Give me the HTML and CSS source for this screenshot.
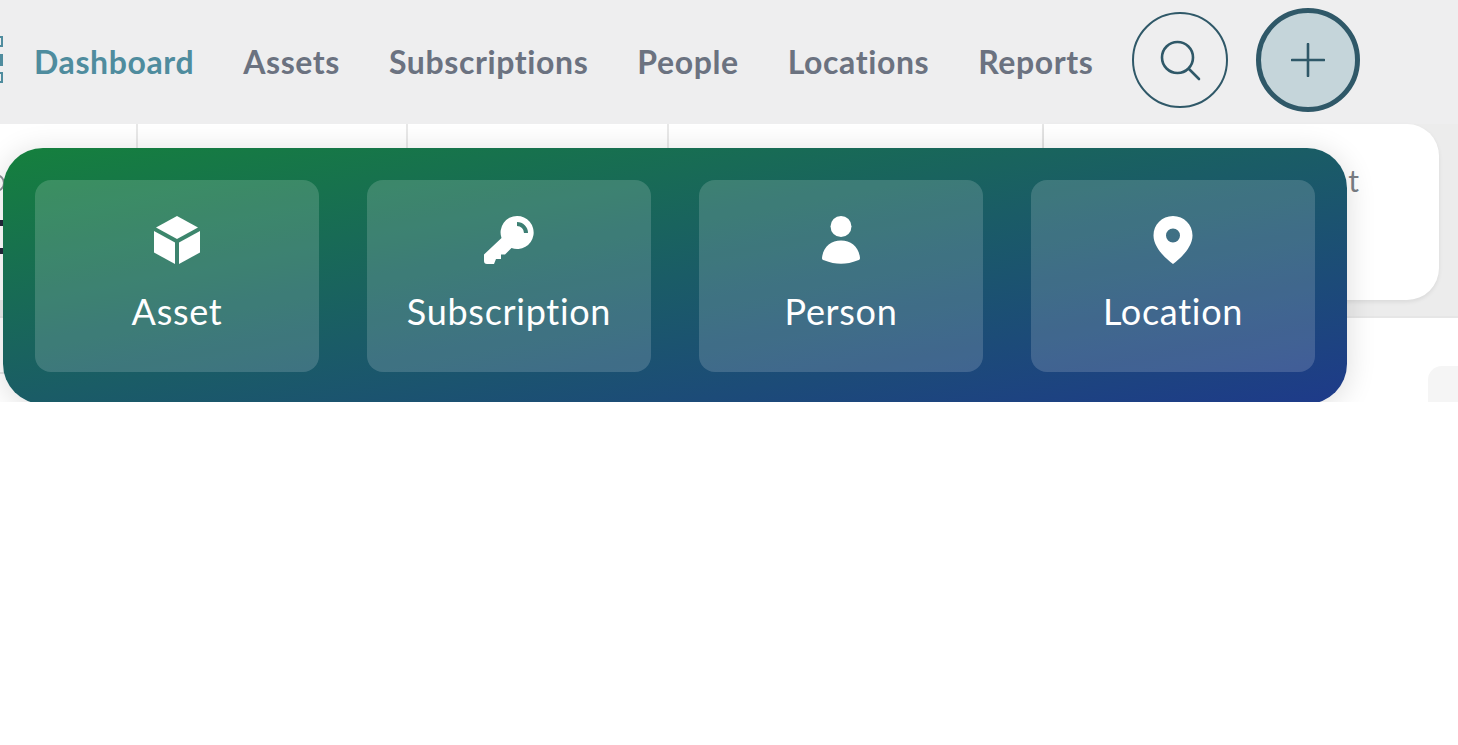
FILE: index.html
```html
<!DOCTYPE html>
<html lang="en">
<head>
  <meta charset="UTF-8" />
  <title>Dashboard</title>
  <link rel="stylesheet" href="styles.css">
</head>
<body>
  <div class="stage">
    <header class="topbar">
      <svg class="logo" width="3" height="48" viewBox="0 0 3 48">
        <rect x="-6" y="1" width="8" height="9" fill="none" stroke="#4f8c9e" stroke-width="2"/>
        <rect x="-6" y="18" width="9" height="12" fill="#4f8c9e"/>
        <rect x="-6" y="37" width="8" height="9" fill="none" stroke="#4f8c9e" stroke-width="2"/>
      </svg>
      <nav class="nav">
        <a class="nav-link active">Dashboard</a>
        <a class="nav-link">Assets</a>
        <a class="nav-link">Subscriptions</a>
        <a class="nav-link">People</a>
        <a class="nav-link">Locations</a>
        <a class="nav-link">Reports</a>
      </nav>
      <button class="round-btn search">
        <svg width="48" height="48" viewBox="0 0 48 48" fill="none" stroke="#2f5868" stroke-width="2.6" stroke-linecap="round">
          <circle cx="21.5" cy="21.500" r="15.5"/>
          <path d="M33 33l10 10"/>
        </svg>
      </button>
      <button class="round-btn add">
        <svg width="34" height="34" viewBox="0 0 34 34" fill="none" stroke="#2f5868" stroke-width="2.6" stroke-linecap="round">
          <path d="M17 1v32M1 17h32"/>
        </svg>
      </button>
    </header>

    <section class="stats">
      <div class="stat s1">
        <span class="stat-ring"></span>
        <span class="stat-bar"></span>
        <span class="stat-bar"></span>
      </div>
      <div class="stat s2"></div>
      <div class="stat s3"></div>
      <div class="stat s4"></div>
      <div class="stat s5"><span class="stat-tail">t</span></div>
    </section>
    <div class="table-row"></div>
    <div class="corner-block"></div>

    <div class="quick-add">
      <a class="quick-item">
        <svg width="48" height="50" viewBox="0 0 48 50" fill="#fff">
          <path d="M24 1L45 12.5 24 24 3 12.5z"/>
          <path d="M1 16l21 11.5V49L1 37.5z"/>
          <path d="M47 16L26 27.5V49l21-11.5z"/>
        </svg>
        <span>Asset</span>
      </a>
      <a class="quick-item">
        <svg width="50" height="50" viewBox="0 0 50 50" fill="#fff">
          <path fill-rule="evenodd" d="M33 1a16.500 16.500 0 1 1-5.500 32L21 39.500h-4V44h-5l-2 5H3a3 3 0 0 1-3-3v-6.500L17.500 23A16.500 16.500 0 0 1 33 1zM33 7A11 11 0 0 1 44 18H40A7 7 0 0 0 33 11z"/>
        </svg>
        <span>Subscription</span>
      </a>
      <a class="quick-item">
        <svg width="40" height="50" viewBox="0 0 40 50" fill="#fff">
          <circle cx="20" cy="11.500" r="10.500"/>
          <path d="M1 43C2 32 10 25.500 20 25.500s18 6.500 19 17.500c0 1-.5 2-2 2.300C25 50 15 50 3 45.300c-1.500-.3-2-1.300-2-2.300z"/>
        </svg>
        <span>Person</span>
      </a>
      <a class="quick-item">
        <svg width="40" height="50" viewBox="0 0 40 50">
          <path fill="#fff" fill-rule="evenodd" d="M20 1c11 0 19.500 8.500 19.500 19.500C39.500 32 28 43 20 49 12 43 .5 32 .5 20.500.5 9.500 9 1 20 1zm0 12.500a7 7 0 1 0 0 14 7 7 0 0 0 0-14z"/>
        </svg>
        <span>Location</span>
      </a>
    </div>
  </div>
</body>
</html>
```

FILE: styles.css
```css
* {
  box-sizing: border-box;
}

body {
  margin: 0;
  background: #ffffff;
  font-family: 'Lato', 'Open Sans', sans-serif;
  font-variant-ligatures: none;
}

.stage {
  position: relative;
  height: 402px;
  overflow: hidden;
  background: #ffffff;
}

.topbar {
  display: flex;
  align-items: center;
  height: 124px;
  padding-bottom: 4px;
  background: #eeeeef;
}

.logo {
  flex: none;
  margin-right: 31px;
}

.nav {
  display: flex;
  gap: 49px;
  padding-top: 2px;
}

.nav-link {
  font-size: 32px;
  font-weight: 700;
  letter-spacing: 0.6px;
  color: #6b7280;
}

.nav-link.active {
  color: #4f8c9e;
}

.round-btn {
  display: flex;
  align-items: center;
  justify-content: center;
  flex: none;
  padding: 0;
  border-radius: 50%;
  background: transparent;
}

.search {
  width: 96px;
  height: 96px;
  margin-left: 39px;
  border: 2px solid #2f5868;
}

.add {
  width: 104px;
  height: 104px;
  margin-left: 28px;
  border: 5px solid #2f5868;
  background: #c5d5da;
}

.stats {
  display: flex;
  height: 194px;
  padding: 0 19px 18px 0;
  background: #ececec;
  border-bottom: 2px solid #e6e6e6;
}

.stat {
  height: 176px;
  background: #ffffff;
  border-right: 2px solid #e8e8e8;
}

.s1 {
  width: 138px;
  display: flex;
  flex-direction: column;
  padding-top: 50px;
}

.s2 { width: 270px; }
.s3 { width: 261px; }
.s4 { width: 375px; }

.s5 {
  flex: 1;
  display: flex;
  justify-content: flex-end;
  padding: 36px 80px 0 0;
  border-right: 0;
  border-radius: 0 32px 32px 0;
  box-shadow: 0 2px 4px rgba(0, 0, 0, 0.08);
}

.stat-ring {
  width: 18px;
  height: 18px;
  margin: 0 0 28px -13px;
  border: 2px solid #8a8f96;
  border-radius: 50%;
}

.stat-bar {
  width: 4px;
  height: 6px;
  margin-bottom: 22px;
  background: #23283a;
}

.stat-tail {
  font-size: 30px;
  line-height: 40px;
  color: #7b7f86;
}

.table-row {
  width: 600px;
  height: 56px;
  border-bottom: 2px solid #e6e6e6;
}

.corner-block {
  position: absolute;
  left: 1428px;
  top: 366px;
  width: 60px;
  height: 60px;
  border-radius: 14px;
  background: #f5f5f5;
}

.quick-add {
  position: absolute;
  left: 3px;
  top: 148px;
  width: 1344px;
  height: 256px;
  display: flex;
  gap: 48px;
  padding: 32px;
  border-radius: 40px;
  background: linear-gradient(to bottom right, #15803d 0%, #1a5c66 50%, #1e3a8a 100%);
  box-shadow: 0 4px 30px rgba(0, 0, 0, 0.14);
}

.quick-item {
  flex: 1;
  display: flex;
  flex-direction: column;
  align-items: center;
  gap: 24px;
  padding-top: 35px;
  border-radius: 16px;
  background: rgba(255, 255, 255, 0.16);
  color: #ffffff;
}

.quick-item span {
  font-size: 36px;
  line-height: 44px;
  letter-spacing: 0.7px;
}
```
